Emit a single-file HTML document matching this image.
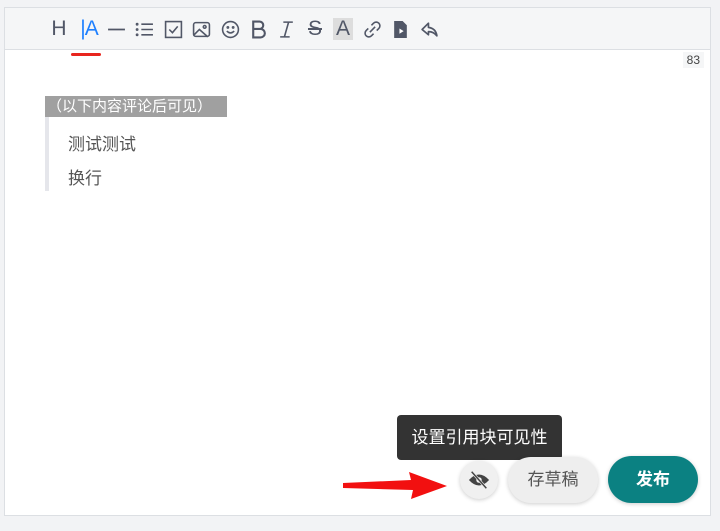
<!DOCTYPE html>
<html><head><meta charset="utf-8"><style>
body{margin:0;width:720px;height:531px;background:#f2f3f5;position:relative;overflow:hidden;font-family:"Liberation Sans","Noto Sans CJK SC",sans-serif}
.ed{position:absolute;left:4px;top:7px;width:707px;height:509px;background:#fff;border:1px solid #dcdfe3;box-sizing:border-box}
.tb{position:absolute;left:0;top:0;right:0;height:41px;background:#f5f6f7;border-bottom:1px solid #dcdfe3}
.ic{position:absolute;top:10px;width:20px;height:22px;color:#515767;font-size:21px;text-align:center;line-height:22px}
.ic svg{width:19px;height:19px;margin-top:2px}
.abs{position:absolute}
</style></head><body>
<div class="ed">
<div class="tb">
<div class="ic" style="left:44px">H</div>
<div class="ic" style="left:71px;width:26px;color:#1e80ff;letter-spacing:-1px">|A</div>
<div class="ic" style="left:101px"><svg viewBox="0 0 18 18"><path d="M1 9h16" stroke="#515767" stroke-width="1.6"/></svg></div>
<div class="ic" style="left:129px"><svg viewBox="0 0 18 18" stroke="#515767" stroke-width="1.5" fill="none"><path d="M6 4h11M6 9h11M6 14h11"/><circle cx="2" cy="4" r=".6"/><circle cx="2" cy="9" r=".6"/><circle cx="2" cy="14" r=".6"/></svg></div>
<div class="ic" style="left:158px"><svg viewBox="0 0 18 18" stroke="#515767" stroke-width="1.5" fill="none"><rect x="1.5" y="1.5" width="15" height="15"/><path d="M5 9l3 3 5-6"/></svg></div>
<div class="ic" style="left:186px"><svg viewBox="0 0 18 18" stroke="#515767" stroke-width="1.5" fill="none"><rect x="1.5" y="2.5" width="15" height="13" rx="2"/><circle cx="12" cy="6.5" r="1.3"/><path d="M2 14l5-5 8 7"/></svg></div>
<div class="ic" style="left:215px"><svg viewBox="0 0 18 18" stroke="#515767" stroke-width="1.5" fill="none"><circle cx="9" cy="9" r="7.5"/><path d="M5.5 10.5q3.5 3.5 7 0"/><circle cx="6.5" cy="7" r=".6"/><circle cx="11.5" cy="7" r=".6"/></svg></div>
<div class="ic" style="left:243px"><svg viewBox="0 0 18 18" stroke="#515767" stroke-width="2" fill="none"><path d="M4 1.5h6a3.5 3.5 0 010 7H4zM4 8.5h7a4 4 0 010 8H4z"/></svg></div>
<div class="ic" style="left:271px"><svg viewBox="0 0 18 18" stroke="#515767" stroke-width="1.5" fill="none"><path d="M6 2h9M3 16h9M11 2L7 16"/></svg></div>
<div class="ic" style="left:300px;text-decoration:line-through">S</div>
<div class="ic" style="left:328px;background:#ddd">A</div>
<div class="ic" style="left:357px"><svg viewBox="0 0 18 18" stroke="#515767" stroke-width="1.5" fill="none"><path d="M8 5l2-2a3.5 3.5 0 015 5l-2 2M10 13l-2 2a3.5 3.5 0 01-5-5l2-2M6.5 11.5l5-5"/></svg></div>
<div class="ic" style="left:385px"><svg viewBox="0 0 18 18"><path d="M3 1h8l4 4v12H3z" fill="#515767"/><path d="M8 8v5l4-2.5z" fill="#fff"/></svg></div>
<div class="ic" style="left:414px"><svg viewBox="0 0 18 18" stroke="#515767" stroke-width="1.6" fill="none" stroke-linejoin="round"><path d="M8 3L2 9l6 5V11q5 0 8 4q-1-7-8-8z"/></svg></div>
</div>
<div class="abs" style="left:66px;top:45px;width:30px;height:3px;background:#e8251e;border-radius:2px"></div>
<div class="abs" style="right:6px;top:44px;background:#f5f6f7;color:#444;font-size:12px;padding:1px 4px">83</div>
<div class="abs" style="left:40px;top:88px;width:182px;height:21px;background:#a0a0a0;color:#fff;font-size:15px;line-height:21px;padding-left:2px;box-sizing:border-box;white-space:nowrap">（以下内容评论后可见）</div>
<div class="abs" style="left:40px;top:109px;width:4px;height:74px;background:#e5e6eb"></div>
<div class="abs" style="left:63px;top:120px;font-size:17px;color:#555;line-height:34px">测试测试<br>换行</div>
</div>
<div class="abs" style="left:397px;top:415px;width:165px;height:45px;background:#333;border-radius:4px;color:#fff;font-size:17px;line-height:45px;text-align:center">设置引用块可见性</div>
<svg class="abs" style="left:340px;top:470px" width="112" height="30"><path d="M3 13l68-3 -2-8 38 14-36 13 2-9 -70-2z" fill="#f21010"/></svg>
<div class="abs" style="left:460px;top:461px;width:38px;height:38px;border-radius:50%;background:#f0f0f0;box-shadow:0 1px 4px rgba(0,0,0,.2)"><svg viewBox="0 0 24 24" width="22" height="22" style="margin:8px"><path d="M1 12q11-12 22 0q-11 12-22 0z" fill="#444"/><circle cx="12" cy="12" r="3" fill="#f0f0f0"/><path d="M4 3l16 18" stroke="#f0f0f0" stroke-width="3"/><path d="M4 3l16 18" stroke="#444" stroke-width="1.6"/></svg></div>
<div class="abs" style="left:508px;top:457px;width:90px;height:46px;border-radius:23px;background:#eee;box-shadow:0 1px 4px rgba(0,0,0,.2);color:#555;font-size:17px;line-height:46px;text-align:center">存草稿</div>
<div class="abs" style="left:608px;top:456px;width:90px;height:47px;border-radius:24px;background:#0b8182;box-shadow:0 1px 4px rgba(0,0,0,.2);color:#fff;font-size:17px;font-weight:bold;line-height:47px;text-align:center">发布</div>
</body></html>
